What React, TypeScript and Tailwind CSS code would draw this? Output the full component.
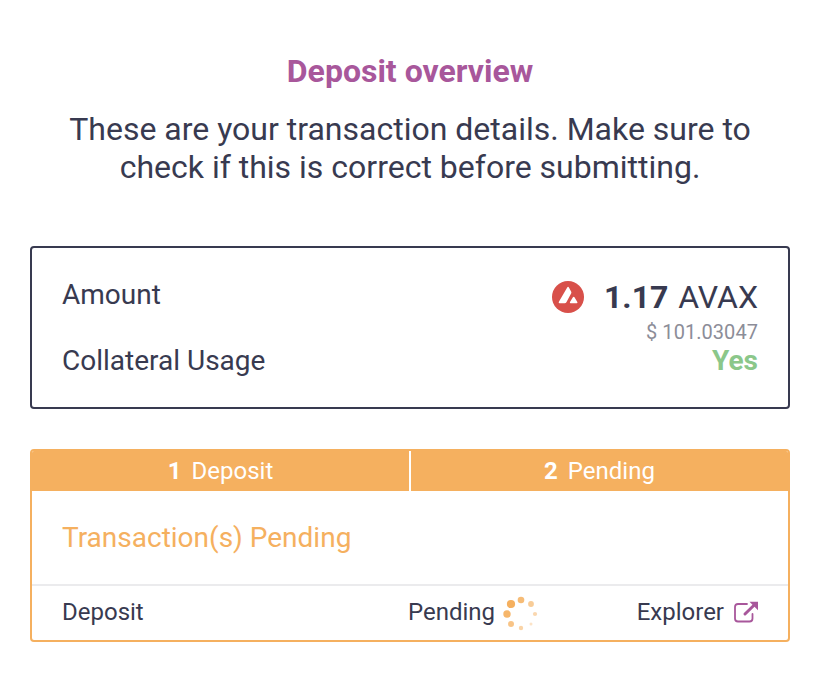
import React from "react";

const dots = [
  { x: 18, y: 4, r: 3.3, o: 0.85 },
  { x: 8, y: 8, r: 4.1, o: 1 },
  { x: 4, y: 18, r: 3.7, o: 0.93 },
  { x: 8, y: 28, r: 3, o: 0.75 },
  { x: 18, y: 32, r: 2.2, o: 0.55 },
  { x: 28, y: 28, r: 1.5, o: 0.35 },
  { x: 32, y: 18, r: 2.1, o: 0.5 },
  { x: 28, y: 8, r: 2.9, o: 0.65 },
];

export default function App() {
  return (
    <div className="h-[694px] w-[824px] overflow-hidden bg-white pl-[30px] pr-[34px] pt-[50px] font-['Roboto',sans-serif] text-[#383a50]">
      <h1 className="text-center text-[32px] font-bold leading-[42px] text-[#a8579b]">Deposit overview</h1>
      <p className="mt-[18px] text-center text-[32px] leading-[38px]">
        These are your transaction details. Make sure to<br />check if this is correct before submitting.
      </p>
      <section className="mt-[60px] flex h-[163px] justify-between rounded-[4px] border-2 border-[#383a50] px-[30px] text-[28px]">
        <div className="pt-[28px]">
          <div className="h-[66px] leading-[38px]">Amount</div>
          <div className="leading-[38px]">Collateral Usage</div>
        </div>
        <div className="flex flex-col items-end pt-[28px]">
          <div className="flex h-[42px] items-center text-[32px]">
            <svg className="mr-5 h-8 w-8" viewBox="0 0 32 32">
              <circle cx="16" cy="16" r="16" fill="#d8504a" />
              <path fill="#fff" d="M15.200 6.500q.9-1.400 1.700 0l2.200 3.900q.6 1.100 0 2.200l-4.700 8.600q-.6 1-1.700 1H7.800q-1.700 0-.9-1.500zM20.900 16.300q.8-1.300 1.600 0l2.800 4.700q.6 1.200-.7 1.200h-5.900q-1.300 0-.7-1.200z" />
            </svg>
            <span className="flex items-center gap-[10px]"><b>1.17</b><span>AVAX</span></span>
          </div>
          <div className="h-[24px] text-[20px] leading-[28px] tracking-[0.05px] text-[#8c8d98]">$ 101.03047</div>
          <div className="font-bold leading-[38px] text-[#8bc78a]">Yes</div>
        </div>
      </section>
      <section className="mt-10 h-[193px] overflow-hidden rounded-[4px] border-2 border-[#f5b05f]">
        <div className="flex h-10 bg-[#f5b05f] text-[24px] leading-[40px] text-white">
          <div className="flex flex-1 justify-center gap-[10px] border-r-2 border-white"><b>1</b><span>Deposit</span></div>
          <div className="flex flex-1 justify-center gap-[10px]"><b>2</b><span>Pending</span></div>
        </div>
        <div className="h-[93px] pl-[30px] pt-[28px] text-[28px] leading-[38px] text-[#f5b05f]">Transaction(s) Pending</div>
        <div className="flex h-[56px] border-t-2 border-[#ebebed] px-[30px] text-[24px] leading-[52px]">
          <div className="w-[346px]">Deposit</div>
          <div className="flex">Pending
            <svg className="ml-[8px] mt-[10px] h-9 w-9" viewBox="0 0 36 36" fill="#f5b05f">
              {dots.map((d, i) => <circle key={i} cx={d.x} cy={d.y} r={d.r} opacity={d.o} />)}
            </svg>
          </div>
          <div className="ml-auto flex">Explorer
            <svg className="ml-[10px] mt-[14px] h-6 w-6" viewBox="0 0 24 24" fill="none" stroke="#a8579b">
              <path strokeWidth="1.800" strokeLinecap="round" d="M13 4H4Q1 4 1 7v11.500Q1 21.500 4 21.500h11.500q3 0 3-3V14" />
              <path strokeWidth="3" strokeLinecap="round" d="M11 14 20 5.200" />
              <path fill="#a8579b" stroke="none" d="M15.500 1.800H24v8.500z" />
            </svg>
          </div>
        </div>
      </section>
    </div>
  );
}
